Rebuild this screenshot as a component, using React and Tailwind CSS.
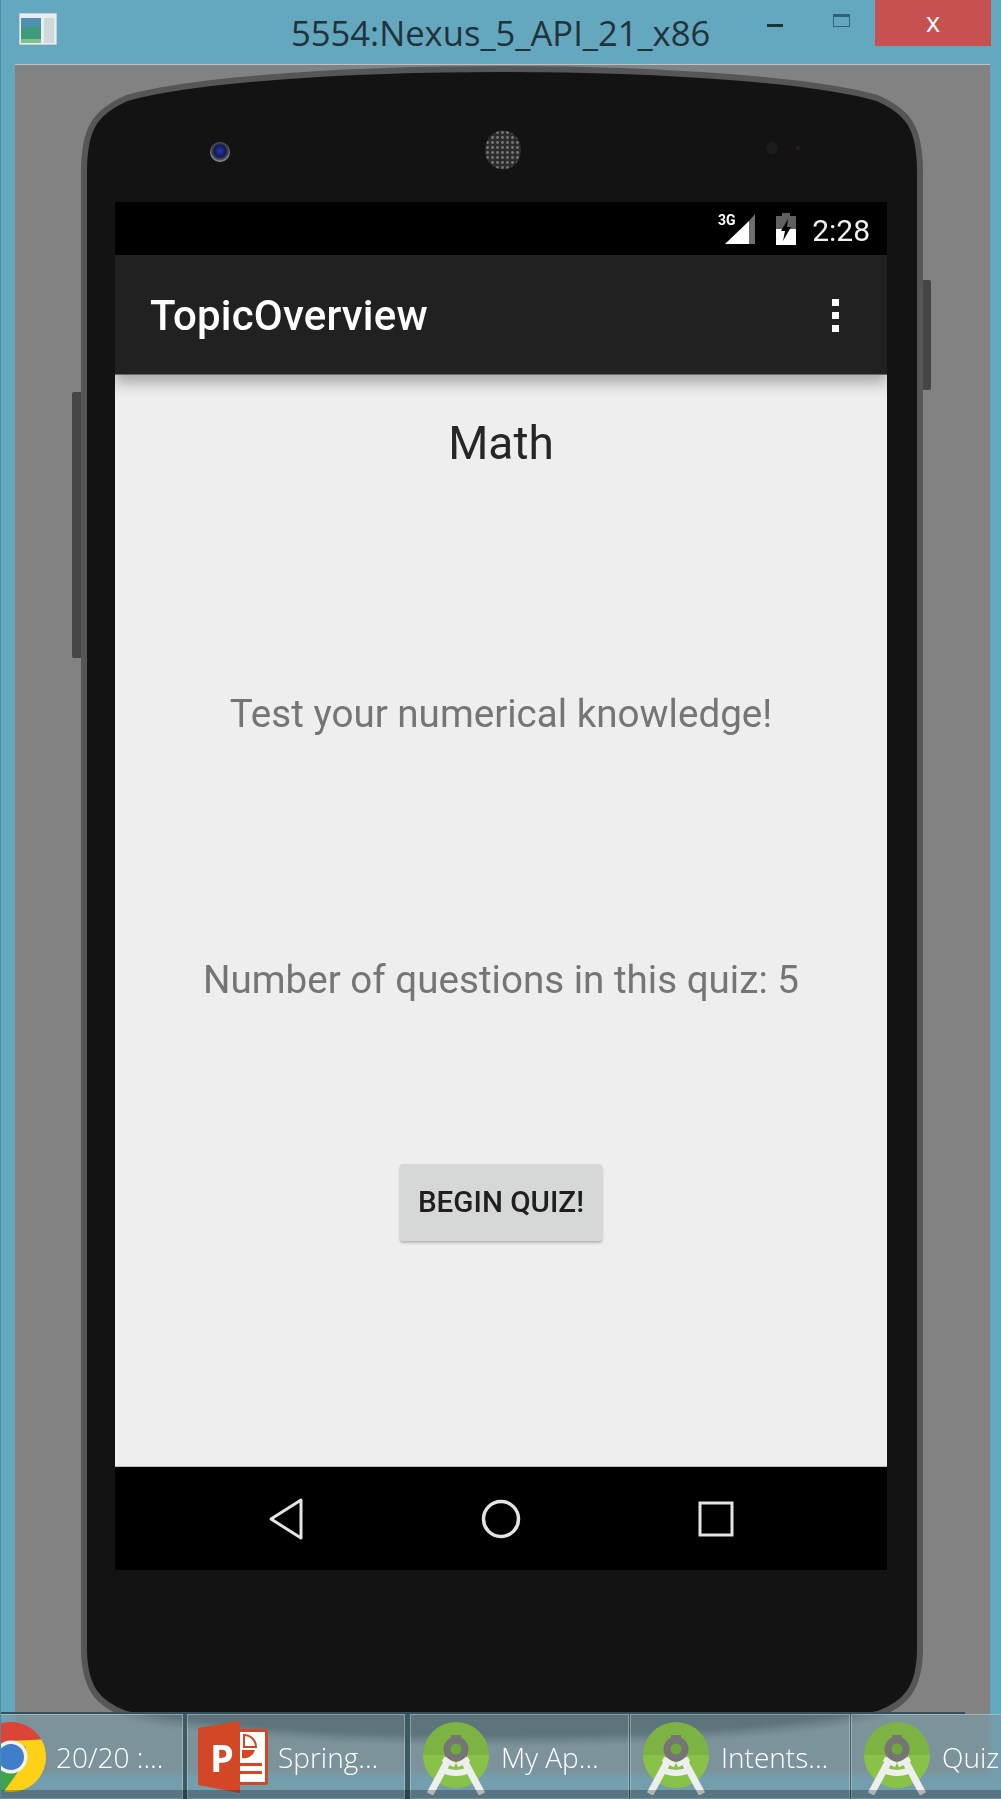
import React from 'react';

const ROBOTO = "font-['Roboto',sans-serif]";
const SEGOE = "font-['Open_Sans',sans-serif]";

function PhoneBody() {
    const outline = 'M84 172 C84 128 95 112 127 98 C192 80 340 69 502 69 C664 69 812 80 877 98 C909 112 920 128 920 172 L920 1648 C920 1688 906 1704 878 1714 C800 1732 660 1741 502 1741 C344 1741 204 1732 126 1714 C98 1704 84 1688 84 1648 Z';
    return (
        <svg className="absolute inset-0 w-full h-full" viewBox="72 65 860 1680">
            <defs>
                <pattern id="mesh" width="5" height="5" patternUnits="userSpaceOnUse">
                    <rect width="5" height="5" fill="#2c2c2c" />
                    <circle cx="2.5" cy="2.5" r="1.4" fill="#777" />
                </pattern>
                <radialGradient id="lens" cx="50%" cy="45%" r="55%">
                    <stop offset="0" stopColor="#2a35b8" />
                    <stop offset="0.55" stopColor="#141a50" />
                    <stop offset="0.8" stopColor="#555" />
                    <stop offset="1" stopColor="#a8a8a8" />
                </radialGradient>
            </defs>
            <rect x="72" y="392" width="10" height="266" rx="2" fill="#454545" />
            <rect x="922" y="280" width="9" height="110" rx="2" fill="#454545" />
            <path d={outline} fill="#131313" stroke="#565656" strokeWidth="6" />
            <circle cx="220" cy="152" r="10" fill="url(#lens)" />
            <ellipse cx="503" cy="150" rx="18" ry="19.5" fill="url(#mesh)" />
            <circle cx="772" cy="148" r="6" fill="#1c1c1c" />
            <circle cx="798" cy="148" r="2" fill="#2e1c1c" />
        </svg>
    );
}

function StatusBar() {
    return (
        <div className="h-[53px] bg-black flex items-center justify-end pr-[17px]">
            <svg width="40" height="32" viewBox="0 0 40 32" className="mr-[18px] blur-[0.5px]">
                <polygon points="7,31 31,31 31,8" fill="#fff" />
                <polygon points="31,31 37,31 37,1 31,8" fill="#6f6f6f" />
                <text x="0" y="12" fontSize="14" fontWeight="700" fill="#fff" fontFamily="Roboto, sans-serif">3G</text>
            </svg>
            <svg width="20" height="32" viewBox="0 0 20 32" className="mr-[16px] blur-[0.5px]">
                <path d="M6 0 H14 V3 H20 V32 H0 V3 H6 Z" fill="#fff" />
                <path d="M6 0 H14 V3 H20 V16 H0 V3 H6 Z" fill="#5f5f5f" />
                <polygon points="12,6 5,18 9,18 7,28 15,14 11,14" fill="#000" />
            </svg>
            <span className={`${ROBOTO} text-[30px] leading-none text-[#f2f2f2] blur-[0.5px] mt-[4px]`}>2:28</span>
        </div>
    );
}

function AppBar() {
    return (
        <div className="relative z-10 h-[120px] bg-[#212121] border-b border-[#6a6a6a] flex items-center justify-between pl-[35px] pr-[48px] shadow-[0_8px_14px_rgba(0,0,0,0.3)]">
            <span className={`${ROBOTO} text-[42px] font-medium leading-none tracking-[0.2px] text-white blur-[0.6px] mt-[3px]`}>TopicOverview</span>
            <div className="flex flex-col gap-[6px] blur-[0.4px] mt-[1px]">
                <div className="w-[7px] h-[7px] bg-white" />
                <div className="w-[7px] h-[7px] bg-white" />
                <div className="w-[7px] h-[7px] bg-white" />
            </div>
        </div>
    );
}

function Content() {
    return (
        <div className={`${ROBOTO} h-[1092px] bg-[#eeeeee] border-b border-[#bdbdbd] flex flex-col items-center pt-[41px]`}>
            <h1 className="text-[46px] leading-[54px] text-[#262626] blur-[0.5px]">Math</h1>
            <p className="mt-[222px] text-[38.6px] leading-[44px] text-[#757575] blur-[0.5px]">Test your numerical knowledge!</p>
            <p className="mt-[222px] text-[38.6px] leading-[44px] text-[#757575] blur-[0.5px]">Number of questions in this quiz: 5</p>
            <button className="mt-[162px] w-[202px] h-[77px] rounded-[3px] bg-[#d6d7d7] shadow-[0_2px_3px_rgba(0,0,0,0.25)] text-[29.6px] font-medium text-[#1f1f1f]">
                <span className="blur-[0.6px] block">BEGIN QUIZ!</span>
            </button>
        </div>
    );
}

function NavBar() {
    return (
        <div className="h-[103px] bg-black flex items-center justify-center gap-[175px] blur-[0.4px]">
            <svg width="40" height="44" viewBox="0 0 40 44" fill="none" stroke="#e4e4e4" strokeWidth="3">
                <path d="M35 3 V41 L5 22 Z" strokeLinejoin="round" />
            </svg>
            <svg width="40" height="44" viewBox="0 0 40 44" fill="none" stroke="#e4e4e4" strokeWidth="3.5">
                <circle cx="20" cy="22" r="17.5" />
            </svg>
            <svg width="40" height="44" viewBox="0 0 40 44" fill="none" stroke="#e4e4e4" strokeWidth="3">
                <rect x="4" y="6" width="32" height="32" />
            </svg>
        </div>
    );
}

function ChromeIcon() {
    return (
        <svg width="70" height="70" viewBox="0 0 70 70" className="shrink-0">
            <path d="M35 0 A35 35 0 0 1 65.3 17.5 L35 19 L13 29 L4.7 17.5 A35 35 0 0 1 35 0 Z" fill="#db4437" />
            <path d="M65.3 17.5 A35 35 0 0 1 28 69.3 L46 44 L50 25 L35 19 Z" fill="#fcd116" />
            <path d="M4.7 17.5 A35 35 0 0 0 28 69.3 L46 44 L22 42 Z" fill="#3da647" />
            <circle cx="35" cy="35" r="16.5" fill="#f1f1f1" />
            <circle cx="35" cy="35" r="13" fill="#3f7fca" />
        </svg>
    );
}

function PowerPointIcon() {
    return (
        <svg width="70" height="72" viewBox="0 0 70 72" className="shrink-0">
            <rect x="38" y="8" width="32" height="56" rx="2" fill="#d24726" />
            <rect x="42" y="11" width="25" height="50" fill="#fff" />
            <path d="M0 7 L42 0 V72 L0 64 Z" fill="#d24726" />
            <path d="M46 14 A12 12 0 0 1 58 26 H46 Z" fill="#fff" stroke="#d24726" strokeWidth="2" />
            <path d="M44 29 H57 A11 11 0 0 1 44 37 Z" fill="#d24726" />
            <rect x="42" y="42" width="22" height="3" fill="#d24726" />
            <rect x="42" y="50" width="22" height="3" fill="#d24726" />
            <text x="12" y="51" fontSize="38" fontWeight="700" fill="#fff" fontFamily="'Open Sans', sans-serif">P</text>
        </svg>
    );
}

function StudioIcon() {
    return (
        <svg width="70" height="74" viewBox="0 0 70 74" className="shrink-0 mt-[2px]">
            <circle cx="35" cy="34" r="33" fill="#7cb342" />
            <path d="M2 34 H68 A33 33 0 0 1 2 34 Z" fill="#8bc34a" opacity="0.9" />
            <path d="M30 34 L9 73" stroke="#eeeeee" strokeWidth="7" fill="none" />
            <path d="M40 34 L61 73" stroke="#eeeeee" strokeWidth="7" fill="none" />
            <path d="M20 48 Q35 56 50 48" stroke="#eeeeee" strokeWidth="6" fill="none" />
            <path d="M22 38 L34 44 M48 38 L36 44" stroke="#eeeeee" strokeWidth="5" fill="none" />
            <rect x="30" y="14" width="10" height="8" fill="#757575" />
            <circle cx="35" cy="28" r="9" fill="#6fa83c" stroke="#757575" strokeWidth="7" />
        </svg>
    );
}

function TaskButton({ icon, label, width }) {
    return (
        <div
            className="h-full shrink-0 flex items-center gap-[10px] pl-[10px] border border-white/30 bg-[rgba(122,154,165,0.72)] backdrop-blur-[2px] overflow-hidden"
            style={{ width }}
        >
            {icon}
            <span className={`${SEGOE} text-[28px] font-light leading-none text-white whitespace-nowrap`}>{label}</span>
        </div>
    );
}

function Taskbar() {
    return (
        <div className="absolute left-0 bottom-0 w-full h-[87px] border-t-2 border-[#33505c] flex -translate-x-[36px]">
            <TaskButton icon={<ChromeIcon />} label="20/20 :..." width={218} />
            <div className="w-[4px] shrink-0 bg-[#3a5a66]" />
            <TaskButton icon={<PowerPointIcon />} label="Spring..." width={218} />
            <div className="w-[5px] shrink-0 bg-[#3a5a66]" />
            <TaskButton icon={<StudioIcon />} label="My Ap..." width={219} />
            <div className="w-[1px] shrink-0 bg-[#3a5a66]" />
            <TaskButton icon={<StudioIcon />} label="Intents..." width={220} />
            <div className="w-[1px] shrink-0 bg-[#3a5a66]" />
            <TaskButton icon={<StudioIcon />} label="Quiz..." width={220} />
            <div className="absolute left-0 bottom-0 w-[1100px] h-[9px] bg-black/25" />
        </div>
    );
}

function TitleBar() {
    return (
        <div className="h-[64px] flex items-start">
            <svg width="38" height="32" viewBox="0 0 38 32" className="ml-[18px] mt-[13px] shrink-0">
                <rect x="0" y="0" width="38" height="32" fill="#e8eef0" stroke="#9db2ba" />
                <rect x="2" y="5" width="20" height="25" fill="#3f9a7e" />
                <rect x="2" y="5" width="20" height="9" fill="#4f8fb0" />
                <rect x="25" y="5" width="10" height="25" fill="#cfd8da" />
                <rect x="2" y="26" width="20" height="4" fill="#7cc28a" />
            </svg>
            <div className={`${SEGOE} ml-[234px] mt-[10px] w-[424px] text-[34.6px] leading-[46px] text-[#22323a] whitespace-nowrap`}>5554:Nexus_5_API_21_x86</div>
            <div className="ml-[52px] mt-[24px] w-[16px] h-[3px] bg-[#22323a]" />
            <div className="ml-[50px] mt-[14px] w-[17px] h-[13px] border border-t-[3px] border-[#33617a]" />
            <div className="ml-[25px] w-[116px] h-[46px] bg-[#c75050] flex items-center justify-center pb-[4px]">
                <span className={`${SEGOE} text-[27px] leading-none text-white`}>x</span>
            </div>
        </div>
    );
}

export default function App() {
    return (
        <div className="relative w-[1001px] h-[1799px] overflow-hidden bg-[#64a8c0] border-l border-[#4d8ba3]">
            <TitleBar />
            <div className="ml-[14px] w-[975px] h-[1710px] bg-[#828282] border-t border-[#b9c5c9] pl-[57px]">
                <div className="relative w-[860px] h-[1680px] pt-[137px] pl-[43px]">
                    <PhoneBody />
                    <div className="relative w-[772px] overflow-hidden">
                        <StatusBar />
                        <AppBar />
                        <Content />
                        <NavBar />
                    </div>
                </div>
            </div>
            <Taskbar />
        </div>
    );
}
